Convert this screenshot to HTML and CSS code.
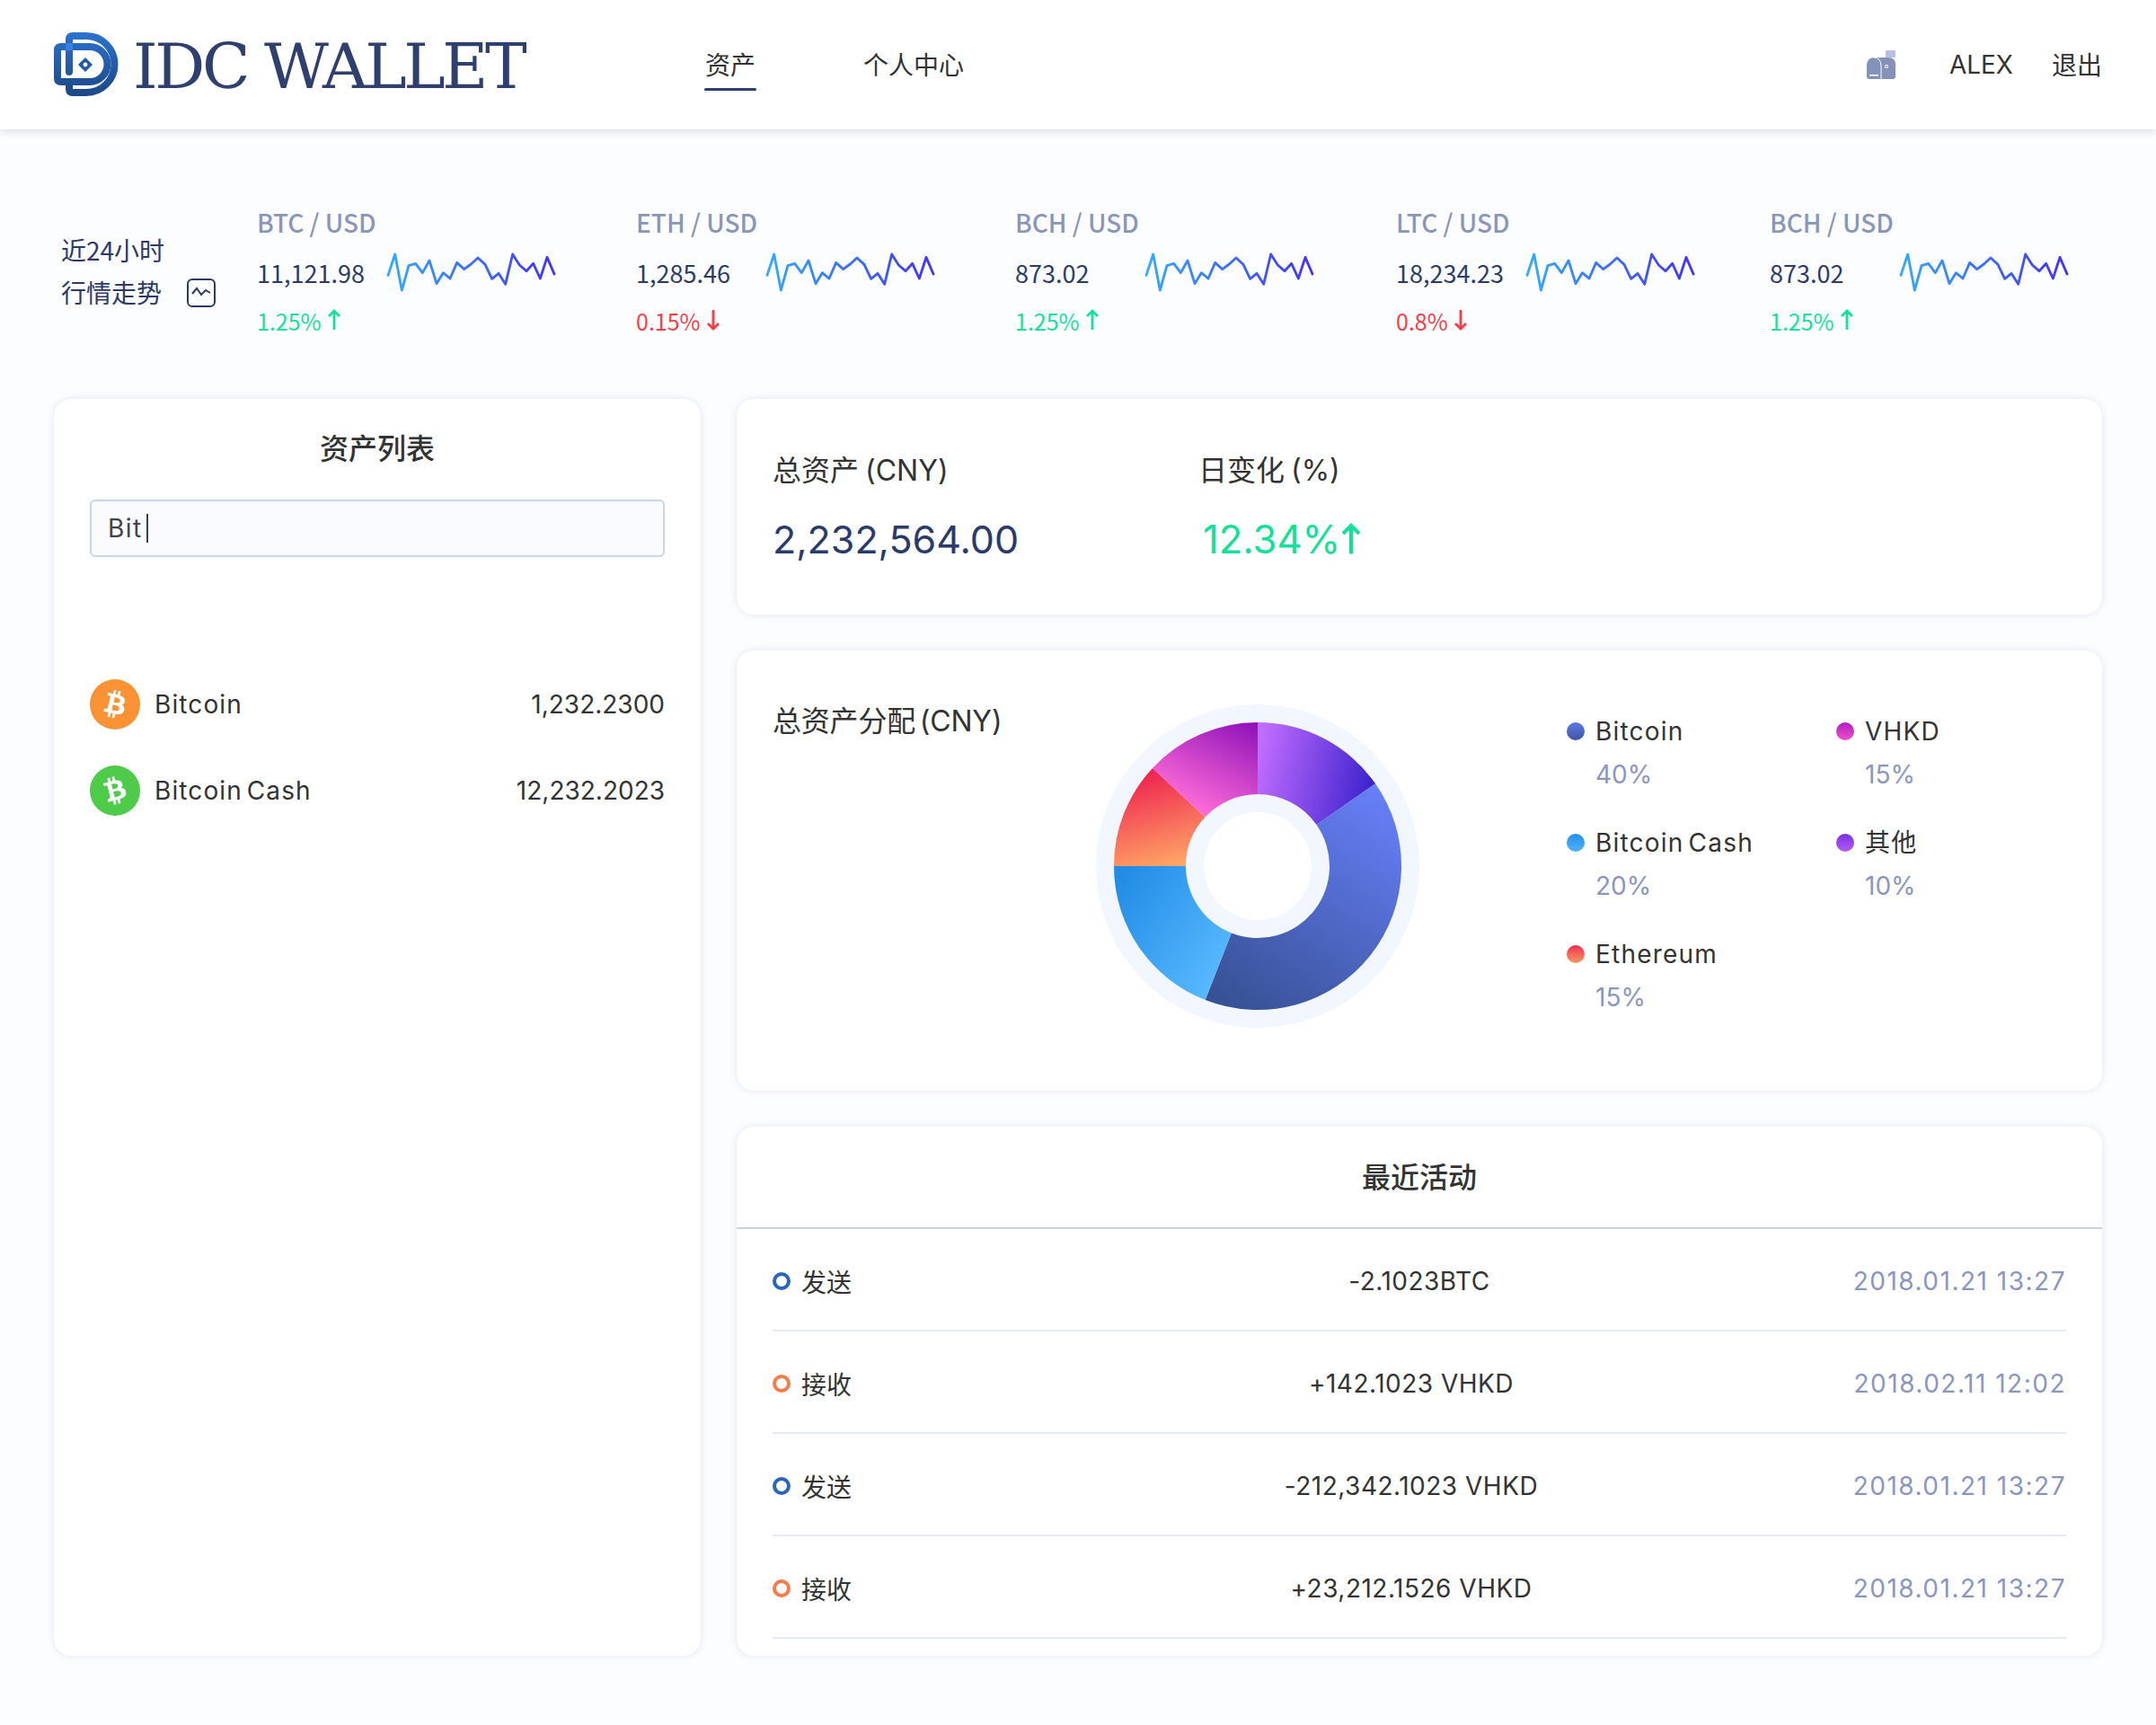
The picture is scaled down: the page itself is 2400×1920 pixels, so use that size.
FILE: index.html
```html
<!DOCTYPE html>
<html lang="zh-CN">
<head>
    <meta charset="UTF-8">
    <title>IDC WALLET</title>
    <link rel="stylesheet" href="styles.css">
</head>
<body>
    <svg class="defs" aria-hidden="true">
        <defs>
            <linearGradient id="sparkGrad" gradientUnits="userSpaceOnUse" x1="42" y1="0" x2="597" y2="0">
                <stop offset="0" stop-color="#33aaff"/>
                <stop offset="1" stop-color="#4530ff"/>
            </linearGradient>
            <linearGradient id="logoGrad" gradientUnits="userSpaceOnUse" x1="0" y1="0" x2="0" y2="72">
                <stop offset="0" stop-color="#2b72cf"/>
                <stop offset="1" stop-color="#1b4783"/>
            </linearGradient>
            <symbol id="spark" viewBox="36 66 570 132">
                <polyline fill="none" stroke="url(#sparkGrad)" stroke-width="8.500" stroke-linejoin="round" stroke-linecap="round" points="42,142 65,72 88,192 111,110 134,103 157,134 180,93 204,170 226,134 249,153 272,100 296,122 319,105 342,84 366,106 389,154 411,136 434,172 458,72 481,108 504,128 527,103 550,153 573,82 597,138"/>
            </symbol>
            <symbol id="arrowUp" viewBox="0 0 16 24">
                <path d="M8 23V2M2 8l6-6 6 6" fill="none" stroke="currentColor" stroke-width="2.800"/>
            </symbol>
            <symbol id="arrowDown" viewBox="0 0 16 24">
                <path d="M8 1v21M2 16l6 6 6-6" fill="none" stroke="currentColor" stroke-width="2.800"/>
            </symbol>
            <symbol id="btc" viewBox="0 0 64 64">
                <path fill="#fff" d="M46.11 27.441c.636-4.258-2.606-6.547-7.039-8.074l1.438-5.768-3.512-.875-1.4 5.616c-.922-.23-1.87-.447-2.812-.662l1.41-5.653-3.509-.875-1.439 5.766c-.764-.174-1.514-.346-2.242-.527l.004-.018-4.842-1.209-.934 3.75s2.605.597 2.55.634c1.422.355 1.68 1.296 1.636 2.042l-1.638 6.571c.098.025.225.061.365.117l-.37-.092-2.297 9.205c-.174.432-.615 1.08-1.609.834.035.051-2.552-.637-2.552-.637l-1.743 4.02 4.57 1.139c.85.213 1.683.436 2.502.646l-1.453 5.835 3.507.875 1.44-5.772c.957.26 1.887.5 2.797.726L27.504 50.8l3.511.875 1.453-5.823c5.987 1.133 10.49.676 12.383-4.738 1.527-4.36-.075-6.875-3.225-8.516 2.294-.531 4.022-2.04 4.483-5.157zM38.087 38.69c-1.086 4.36-8.426 2.004-10.807 1.412l1.928-7.729c2.38.594 10.011 1.77 8.88 6.317zm1.085-11.312c-.99 3.966-7.1 1.951-9.083 1.457l1.748-7.01c1.983.494 8.367 1.416 7.335 5.553z"/>
            </symbol>
        </defs>
    </svg>

    <header class="topbar">
        <div class="brand">
            <svg class="brand-mark" viewBox="0 0 72 72">
                <path d="M17 44V8q0-4 4-4h15a31.500 31.500 0 0 1 0 63H21q-4 0-4-4v-4" fill="none" stroke="url(#logoGrad)" stroke-width="8" stroke-linecap="round"/>
                <path d="M40 16H8q-4 0-4 4v31q0 4 4 4h32a19.500 19.500 0 0 0 0-39z" fill="none" stroke="url(#logoGrad)" stroke-width="8"/>
                <rect x="13" y="12" width="8" height="8" fill="#3a80de"/>
                <path d="M35 28l8 8-8 8-8-8z" fill="#1f5ca8"/>
                <circle cx="35" cy="36" r="2.400" fill="#fff"/>
            </svg>
            <span class="brand-name">IDC WALLET</span>
        </div>
        <nav class="nav">
            <a class="nav-item active">资产</a>
            <a class="nav-item">个人中心</a>
        </nav>
        <div class="user">
            <svg class="mailbox" viewBox="0 0 32 32">
                <path d="M21 1.500q0-1.500 1.500-1.500h8q1.500 0 1.500 1.500v5q0 1.500-1.500 1.500H23v7h-2z" fill="#b6c1dc"/>
                <path d="M0 18q0-10 8-10h16q8 0 8 8v13q0 3-3 3H3q-3 0-3-3z" fill="#8492b9"/>
                <path d="M8 8q8 0 8 10v14" fill="none" stroke="#fff" stroke-width="1"/>
                <rect x="3" y="27" width="10" height="1.500" fill="#fff"/>
                <circle cx="22" cy="18" r="2" fill="#fff"/>
                <circle cx="22" cy="18" r="1" fill="#8492b9"/>
            </svg>
            <span class="user-name">ALEX</span>
            <a class="logout">退出</a>
        </div>
    </header>

    <section class="market">
        <div class="market-title">
            <div>近24小时</div>
            <div class="market-title-row">行情走势
                <svg class="trend-icon" viewBox="0 0 32 32">
                    <rect x="1" y="1" width="30" height="30" rx="5" fill="none" stroke="#2c3a66" stroke-width="2"/>
                    <path d="M6 17l5-6 5 7 5-5 5 3" fill="none" stroke="#2c3a66" stroke-width="2"/>
                </svg>
            </div>
        </div>

        <div class="ticker">
            <div class="ticker-name">BTC / USD</div>
            <div class="ticker-mid">
                <span class="ticker-val">11,121.98</span>
                <svg class="spark"><use href="#spark"/></svg>
            </div>
            <div class="ticker-chg up">1.25% <svg class="arrow"><use href="#arrowUp"/></svg></div>
        </div>
        <div class="ticker">
            <div class="ticker-name">ETH / USD</div>
            <div class="ticker-mid">
                <span class="ticker-val">1,285.46</span>
                <svg class="spark"><use href="#spark"/></svg>
            </div>
            <div class="ticker-chg down">0.15% <svg class="arrow"><use href="#arrowDown"/></svg></div>
        </div>
        <div class="ticker wide">
            <div class="ticker-name">BCH / USD</div>
            <div class="ticker-mid">
                <span class="ticker-val">873.02</span>
                <svg class="spark"><use href="#spark"/></svg>
            </div>
            <div class="ticker-chg up">1.25% <svg class="arrow"><use href="#arrowUp"/></svg></div>
        </div>
        <div class="ticker narrow">
            <div class="ticker-name">LTC / USD</div>
            <div class="ticker-mid">
                <span class="ticker-val">18,234.23</span>
                <svg class="spark"><use href="#spark"/></svg>
            </div>
            <div class="ticker-chg down">0.8% <svg class="arrow"><use href="#arrowDown"/></svg></div>
        </div>
        <div class="ticker">
            <div class="ticker-name">BCH / USD</div>
            <div class="ticker-mid">
                <span class="ticker-val">873.02</span>
                <svg class="spark"><use href="#spark"/></svg>
            </div>
            <div class="ticker-chg up">1.25% <svg class="arrow"><use href="#arrowUp"/></svg></div>
        </div>
    </section>

    <main class="content">
        <section class="card assets">
            <h3 class="card-title">资产列表</h3>
            <div class="search">Bit<span class="caret"></span></div>
            <div class="asset-list">
                <div class="asset">
                    <span class="coin coin-btc"><svg viewBox="0 0 64 64"><use href="#btc"/></svg></span>
                    <span class="asset-name">Bitcoin</span>
                    <span class="asset-val">1,232.2300</span>
                </div>
                <div class="asset">
                    <span class="coin coin-bch"><svg viewBox="0 0 64 64"><g transform="rotate(-28 32 32)"><use href="#btc" width="64" height="64"/></g></svg></span>
                    <span class="asset-name">Bitcoin Cash</span>
                    <span class="asset-val">12,232.2023</span>
                </div>
            </div>
        </section>

        <div class="side">
            <section class="card totals">
                <div class="total">
                    <div class="total-label">总资产 (CNY)</div>
                    <div class="total-val">2,232,564.00</div>
                </div>
                <div class="total">
                    <div class="total-label">日变化 (%)</div>
                    <div class="total-val up change">12.34%<svg class="arrow-big"><use href="#arrowUp"/></svg></div>
                </div>
            </section>

            <section class="card share">
                <div class="share-title">总资产分配 (CNY)</div>
                <svg class="donut" viewBox="0 0 360 360">
                    <defs>
                        <linearGradient id="segPurple" gradientUnits="userSpaceOnUse" x1="180" y1="60" x2="312" y2="88">
                            <stop offset="0" stop-color="#c06cff"/><stop offset="1" stop-color="#3a20cc"/>
                        </linearGradient>
                        <linearGradient id="segNavy" gradientUnits="userSpaceOnUse" x1="320" y1="90" x2="150" y2="340">
                            <stop offset="0" stop-color="#6880fa"/><stop offset="1" stop-color="#375194"/>
                        </linearGradient>
                        <linearGradient id="segBlue" gradientUnits="userSpaceOnUse" x1="30" y1="190" x2="160" y2="280">
                            <stop offset="0" stop-color="#228de6"/><stop offset="1" stop-color="#5abaff"/>
                        </linearGradient>
                        <linearGradient id="segRed" gradientUnits="userSpaceOnUse" x1="65" y1="72" x2="95" y2="180">
                            <stop offset="0" stop-color="#ee2250"/><stop offset="1" stop-color="#ffa966"/>
                        </linearGradient>
                        <linearGradient id="segPink" gradientUnits="userSpaceOnUse" x1="125" y1="125" x2="180" y2="20">
                            <stop offset="0" stop-color="#ff6cd8"/><stop offset="1" stop-color="#8c10b8"/>
                        </linearGradient>
                    </defs>
                    <circle cx="180" cy="180" r="180" fill="#f1f6ff"/>
                    <path fill="url(#segPurple)" d="M180 20A160 160 0 0 1 311.070 88.230L245.530 134.110A80 80 0 0 0 180 100z"/>
                    <path fill="url(#segNavy)" d="M311.070 88.230A160 160 0 0 1 121.620 328.980L150.810 254.490A80 80 0 0 0 245.530 134.110z"/>
                    <path fill="url(#segBlue)" d="M121.620 328.980A160 160 0 0 1 20 180H100A80 80 0 0 0 150.810 254.490z"/>
                    <path fill="url(#segRed)" d="M20 180A160 160 0 0 1 62.980 70.880L121.490 125.440A80 80 0 0 0 100 180z"/>
                    <path fill="url(#segPink)" d="M62.980 70.880A160 160 0 0 1 180 20V100A80 80 0 0 0 121.490 125.440z"/>
                    <circle cx="180" cy="180" r="60" fill="#fff"/>
                </svg>
                <div class="legend">
                    <div class="legend-item"><div class="legend-name"><i class="dot dot-navy"></i>Bitcoin</div><div class="legend-pct">40%</div></div>
                    <div class="legend-item"><div class="legend-name"><i class="dot dot-pink"></i>VHKD</div><div class="legend-pct">15%</div></div>
                    <div class="legend-item"><div class="legend-name"><i class="dot dot-blue"></i>Bitcoin Cash</div><div class="legend-pct">20%</div></div>
                    <div class="legend-item"><div class="legend-name"><i class="dot dot-purple"></i>其他</div><div class="legend-pct">10%</div></div>
                    <div class="legend-item"><div class="legend-name"><i class="dot dot-red"></i>Ethereum</div><div class="legend-pct">15%</div></div>
                </div>
            </section>

            <section class="card activity">
                <h3 class="activity-head">最近活动</h3>
                <div class="activity-row">
                    <span class="act-type"><i class="ring ring-send"></i>发送</span>
                    <span class="act-amt">-2.1023BTC</span>
                    <span class="act-date">2018.01.21 13:27</span>
                </div>
                <div class="activity-row">
                    <span class="act-type"><i class="ring ring-recv"></i>接收</span>
                    <span class="act-amt shift">+142.1023 VHKD</span>
                    <span class="act-date">2018.02.11 12:02</span>
                </div>
                <div class="activity-row">
                    <span class="act-type"><i class="ring ring-send"></i>发送</span>
                    <span class="act-amt shift">-212,342.1023 VHKD</span>
                    <span class="act-date">2018.01.21 13:27</span>
                </div>
                <div class="activity-row">
                    <span class="act-type"><i class="ring ring-recv"></i>接收</span>
                    <span class="act-amt shift">+23,212.1526 VHKD</span>
                    <span class="act-date">2018.01.21 13:27</span>
                </div>
            </section>
        </div>
    </main>
</body>
</html>
```

FILE: styles.css
```css
*{
    box-sizing: border-box;
}
body{
    margin: 0;
    min-height: 1920px;
    background-color: #fcfdff;
    color: #333;
    font-family: Inter, "Noto Sans CJK SC", sans-serif;
    font-size: 28px;
}
h3{
    margin: 0;
    font-weight: 500;
}
.defs{
    display: block;
    width: 0;
    height: 0;
}

/* top bar */
.topbar{
    display: flex;
    align-items: center;
    height: 144px;
    padding: 0 60px;
    background-color: #fff;
    box-shadow: 0 2px 10px rgba(120,135,180,0.3);
}
.brand{
    display: flex;
    align-items: center;
    width: 725px;
}
.brand-mark{
    width: 72px;
    height: 72px;
    margin-right: 16px;
}
.brand-name{
    margin-top: 3px;
    font-family: "DejaVu Serif", serif;
    font-size: 70px;
    line-height: 72px;
    color: #2f4070;
    font-weight: 400;
    letter-spacing: -3.4px;
    white-space: nowrap;
}
.nav{
    display: flex;
    gap: 120px;
    margin-top: -3px;
}
.nav-item{
    position: relative;
    font-family: "Noto Sans CJK SC", sans-serif;
    line-height: 40px;
}
.nav-item.active::after{
    content: "";
    position: absolute;
    left: -1px;
    right: -1px;
    bottom: -10px;
    height: 3px;
    border-radius: 2px;
    background-color: #2f4070;
}
.user{
    display: flex;
    align-items: center;
    margin-left: auto;
}
.mailbox{
    width: 32px;
    height: 32px;
    margin-right: 60px;
}
.user-name{
    margin-right: 43px;
}
.logout{
    margin-top: -3px;
    font-family: "Noto Sans CJK SC", sans-serif;
}

/* ticker strip */
.market{
    display: flex;
    align-items: center;
    height: 150px;
    margin: 83px 0 67px;
    padding-left: 68px;
    font-family: "Noto Sans CJK SC", sans-serif;
    color: #2c3a66;
}
.market-title{
    width: 218px;
    line-height: 47px;
    font-size: 28px;
}
.market-title-row{
    display: flex;
    align-items: center;
    gap: 28px;
}
.trend-icon{
    width: 32px;
    height: 32px;
}
.ticker{
    width: 422px;
}
.ticker.wide{
    width: 424px;
}
.ticker.narrow{
    width: 416px;
}
.ticker-name{
    font-size: 28px;
    line-height: 40px;
    font-weight: 500;
    color: #8a96b8;
}
.ticker-mid{
    display: grid;
    grid-template-columns: 144px 190px;
    align-items: center;
    height: 44px;
    margin-top: 14px;
}
.ticker-val{
    font-size: 27px;
}
.spark{
    width: 190px;
    height: 44px;
}
.ticker-chg{
    display: flex;
    align-items: center;
    gap: 6px;
    margin-top: 12px;
    font-size: 25px;
    line-height: 40px;
}
.arrow{
    width: 16px;
    height: 24px;
    margin-top: -3px;
}
.up{
    color: #14e09a;
}
.down{
    color: #fb3c46;
}

/* cards */
.content{
    display: grid;
    grid-template-columns: 720px 1520px;
    gap: 40px;
    padding: 0 60px;
}
.card{
    background-color: #fff;
    border-radius: 20px;
    box-shadow: 0 0 10px rgba(120,135,180,0.2);
}
.side{
    display: flex;
    flex-direction: column;
    gap: 40px;
}

/* asset list */
.assets{
    height: 1399px;
    padding: 36px 40px 0;
}
.card-title{
    font-size: 32px;
    line-height: 40px;
    text-align: center;
}
.search{
    display: flex;
    align-items: center;
    height: 64px;
    margin-top: 36px;
    padding: 0 18px;
    background-color: #f9fbff;
    border: 2px solid #c8d3ec;
    border-radius: 6px;
    color: #444;
    letter-spacing: 1.5px;
}
.caret{
    width: 2px;
    height: 32px;
    margin-left: 4px;
    background-color: #2f4070;
}
.asset-list{
    display: flex;
    flex-direction: column;
    gap: 40px;
    margin-top: 136px;
}
.asset{
    display: flex;
    align-items: center;
}
.coin{
    display: block;
    width: 56px;
    height: 56px;
    padding: 3px;
    margin-right: 16px;
    border-radius: 50%;
}
.coin svg{
    display: block;
    width: 50px;
    height: 50px;
}
.coin-btc{
    background-color: #fb9235;
}
.coin-bch{
    background-color: #4ecb4a;
}
.asset-name{
    letter-spacing: 1.1px;
    word-spacing: -4px;
}
.asset-val{
    margin-left: auto;
}

/* totals */
.totals{
    display: flex;
    height: 240px;
    padding: 60px 40px 0;
}
.total{
    width: 474px;
}
.total-label{
    font-size: 32px;
    line-height: 40px;
    word-spacing: -2px;
}
.total-val{
    display: flex;
    align-items: center;
    margin-top: 26px;
    font-size: 43px;
    line-height: 60px;
    color: #2b3a6b;
}
.total-val.change{
    padding-left: 5px;
    font-size: 43.500px;
    color: #14e09a;
}
.arrow-big{
    width: 24px;
    height: 38px;
    color: #14e09a;
}

/* allocation */
.share{
    display: flex;
    height: 490px;
    padding: 60px 40px 0;
}
.share-title{
    flex: none;
    width: 360px;
    margin-top: -1px;
    font-size: 32px;
    line-height: 40px;
    word-spacing: -4px;
    letter-spacing: -0.2px;
}
.donut{
    flex: none;
    width: 360px;
    height: 360px;
}
.legend{
    display: grid;
    grid-template-columns: 300px 250px;
    grid-auto-rows: 124px;
    margin: 10px 0 0 164px;
}
.legend-name{
    display: flex;
    align-items: center;
    line-height: 40px;
    letter-spacing: 1.2px;
    word-spacing: -4px;
}
.legend-pct{
    margin-top: 8px;
    padding-left: 32px;
    line-height: 40px;
    color: #8a96c0;
}
.dot{
    width: 20px;
    height: 20px;
    margin-right: 12px;
    border-radius: 50%;
}
.dot-navy{ background: linear-gradient(#5f78e4,#3c56a4); }
.dot-pink{ background: linear-gradient(#b01ec4,#f050d0); }
.dot-blue{ background: linear-gradient(#2490e8,#50b2fc); }
.dot-purple{ background: linear-gradient(#7a30dc,#b45cf4); }
.dot-red{ background: linear-gradient(#ee2f50,#fd9a60); }

/* recent activity */
.activity{
    height: 589px;
    padding-bottom: 19px;
}
.activity-head{
    height: 114px;
    padding-top: 37px;
    font-size: 32px;
    line-height: 40px;
    text-align: center;
    border-bottom: 2px solid #c8d3ec;
}
.activity-row{
    display: grid;
    grid-template-columns: 1fr 1fr 1fr;
    align-items: center;
    height: 114px;
    margin: 0 40px;
    padding-top: 3px;
    border-bottom: 2px solid #e6eaf7;
}
.act-type{
    display: flex;
    align-items: center;
    font-family: "Noto Sans CJK SC", sans-serif;
}
.ring{
    width: 20px;
    height: 20px;
    margin-right: 12px;
    border-radius: 50%;
    border: 4px solid;
}
.ring-send{
    border-color: #2a66bd;
}
.ring-recv{
    border-color: #fb7b4b;
}
.act-amt{
    text-align: center;
    white-space: nowrap;
    letter-spacing: 0.5px;
}
.act-amt.shift{
    padding-right: 18px;
}
.act-date{
    text-align: right;
    color: #8a96c0;
    letter-spacing: 1.5px;
}
```
